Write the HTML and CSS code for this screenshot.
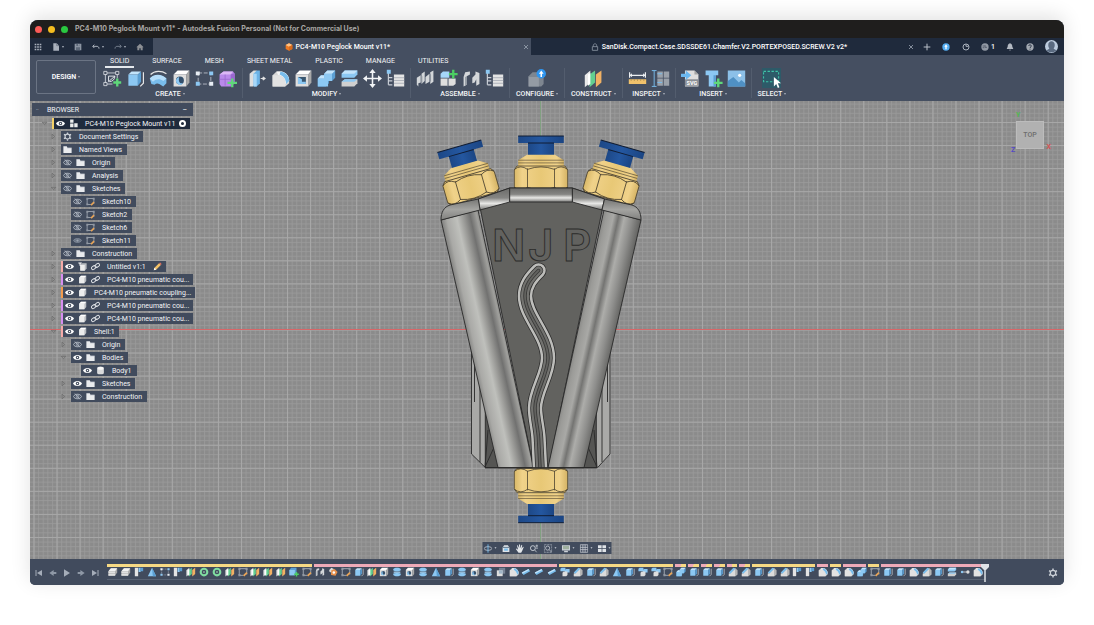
FILE: index.html
```html
<!DOCTYPE html>
<html lang="en">
<head>
<meta charset="utf-8">
<title>PC4-M10 Peglock Mount v11* - Autodesk Fusion Personal</title>
<link rel="stylesheet" href="styles.css">
</head>
<body>
<svg class="defs" width="0" height="0" aria-hidden="true">
<defs>
<symbol id="sketchnew" viewBox="0 0 24 24"><path d="M3 5h15v7M3 5v14h9" fill="none" stroke="#c9ced6" stroke-width="1.2"/><path d="M1 3h4v4H1zM16 3h4v4h-4zM1 17h4v4H1z" fill="#454f61" stroke="#e3e6ea"/><path d="M7 9h8l-8 7zM15 9c0 4-3 7-7 7" fill="none" stroke="#e3e6ea" stroke-width="1.2"/><path d="M18 12v10M13 17h10" stroke="#5fd87a" stroke-width="3"/></symbol>
<symbol id="ext" viewBox="0 0 24 24"><path d="M3 7l4-4h12l-4 4z" fill="#c3e4fb"/><path d="M3 7h12v14H3z" fill="#8cc8f3"/><path d="M15 7l4-4v13l-4 5z" fill="#5b9fd3"/><path d="M22 4v14l-4 4" fill="none" stroke="#e6e6e6" stroke-width="1.5"/></symbol>
<symbol id="sweep" viewBox="0 0 24 24"><path d="M2 7C7 2 16 2 22 6" fill="none" stroke="#e6e6e6" stroke-width="1.6"/><path d="M1 12c4-5 15-6 21 0v6l-4 4-5-3c-2-1-4-1-6 1l-4-1z" fill="#79bdec"/><path d="M1 12c4-6 15-7 21 0l-4 3c-4-3-9-3-13 1z" fill="#b5ddfa"/></symbol>
<symbol id="hole" viewBox="0 0 24 24"><path d="M2 7l5-5h15l-4 5z" fill="#fff"/><path d="M2 7h16v15H2z" fill="#dedede"/><path d="M18 7l4-5v15l-4 5z" fill="#a9a9a9"/><circle cx="10" cy="14.500" r="5" fill="#34506c"/><path d="M5 15a5 5 0 0 0 9 3c-5 1-6-3-5-8-3 1-4 3-4 5z" fill="#8cc8f3"/></symbol>
<symbol id="rect" viewBox="0 0 24 24"><path d="M4 5h16v14H4z" fill="none" stroke="#c9ced6" stroke-dasharray="5 2"/><path d="M1 3h5v5H1zM18 16h5v5h-5z" fill="#e8eef4"/><path d="M18 3h5v5h-5zM1 16h5v5H1z" fill="#8cc8f3"/></symbol>
<symbol id="form" viewBox="0 0 24 24"><path d="M2 7l5-4h12l2 3v12l-5 4H4l-2-3z" fill="#b98aea"/><path d="M2 7l5-4h12l-3 4z" fill="#dcb8f6"/><path d="M16 7l5-2v13l-5 4z" fill="#9a68cf"/><path d="M9 7v14M2 13h14l5-2" stroke="#9a68cf" fill="none"/><path d="M18 12v11M12 17.500h12" stroke="#5fd87a" stroke-width="3"/></symbol>
<symbol id="press" viewBox="0 0 24 24"><path d="M2 6l5-4h4v16l-5 4H2z" fill="#dedede"/><path d="M7 6l4-4h4v16l-4 4H7z" fill="#6db3e6"/><path d="M7 6h4v16H7z" fill="#a6d7f9"/><path d="M16 12h5M19 10l3 2-3 2z" stroke="#e6e6e6" stroke-width="1.200" fill="#e6e6e6"/></symbol>
<symbol id="fillet" viewBox="0 0 24 24"><path d="M2 8l5-5h7c5 1 9 6 9 11v4l-5 4H2z" fill="#d5d5d5"/><path d="M7 3h6c6 1 10 6 10 12l-5 4c0-7-3-10-9-11z" fill="#f4f4f4"/><path d="M12 3c6 1 11 5 11 12l-4 4c0-6-3-10-8-12z" fill="#79bdec"/><path d="M2 8h6c6 0 10 5 10 11v3H2z" fill="#e2e2e2"/></symbol>
<symbol id="chamfer" viewBox="0 0 24 24"><path d="M2 14L13 3h5l5 5v10l-5 4H2z" fill="#b4b4b4"/><path d="M2 13L13 2l5 2L6 17z" fill="#79bdec"/><path d="M5 17l12-12v17H2v-5z" fill="#dcdcdc"/></symbol>
<symbol id="shell" viewBox="0 0 24 24"><path d="M2 7l5-5h15l-4 5z" fill="#fff"/><path d="M18 7l4-5v15l-4 5z" fill="#a9a9a9"/><path d="M2 7h16v15H2z" fill="#dedede"/><path d="M5 10h10v9H5z" fill="#39566f"/><path d="M5 10l5 3v3h5v3H5z" fill="#8cc8f3"/></symbol>
<symbol id="combine" viewBox="0 0 24 24"><path d="M1 12l4-4h4V6l4-4h10v9l-4 4h-4v3l-4 4H1z" fill="#5b9fd3"/><path d="M1 12h8V6h10v9h-5v7H1z" fill="#8cc8f3"/><path d="M1 12l4-4h4v4zM9 6l4-4h10l-4 4z" fill="#c3e4fb"/></symbol>
<symbol id="split" viewBox="0 0 24 24"><path d="M2 6l4-4h16v5l-4 4H2z" fill="#8cc8f3"/><path d="M2 6l4-4h16l-4 4z" fill="#c3e4fb"/><path d="M2 16l4-3h16v5l-4 4H2z" fill="#cfcfcf"/><path d="M2 16l4-3h16l-4 3z" fill="#8cc8f3"/></symbol>
<symbol id="move" viewBox="0 0 24 24"><path d="M12 3v18M3 12h18" stroke="#f2f4f6" stroke-width="2"/><path d="M12 0l4 5H8zM12 24l4-5H8zM0 12l5-4v8zM24 12l-5-4v8z" fill="#f2f4f6"/></symbol>
<symbol id="param" viewBox="0 0 24 24"><path d="M3 5v15M3 11h5M3 15h5M3 20h5" stroke="#c9ced6" stroke-width="1.500" fill="none"/><path d="M1 1h5v5H1z" fill="#8cc8f3"/><path d="M10 7h13v15H10z" fill="#e4e4e4"/><path d="M10 11h13M10 14.500h13M10 18h13" stroke="#a2a8b1"/></symbol>
<symbol id="joint" viewBox="0 0 24 24"><path d="M1 11l5-3v9l-3 1v4l-2-2zM7 6l4-3v12l-4 4zM12 10l5-4v10l-5 3zM18 4l4-2v14l-4 3z" fill="#d4d7da"/><path d="M6 8l2 1v9l-2-1zM17 6l2 1v9l-2-1z" fill="#8e959e"/></symbol>
<symbol id="newcomp" viewBox="0 0 24 24"><path d="M2 6l3-3h8v8H2z" fill="#a6d7f9"/><path d="M2 12h9v9H2zM12 12h9v7l-3 2h-6z" fill="#dedede"/><path d="M11 12v10" stroke="#8a929d"/><path d="M18 1v11M12.500 6.500h11" stroke="#4ccf63" stroke-width="3"/></symbol>
<symbol id="newbox" viewBox="0 0 24 24"><path d="M1 7l4-5h13v12l-4 6H1z" fill="#5b9fd3"/><path d="M1 7h13v13H1z" fill="#8cc8f3"/><path d="M18 12v11M12.500 17.500h11" stroke="#4ccf63" stroke-width="3.500"/></symbol>
<symbol id="jorigin" viewBox="0 0 24 24"><path d="M2 10l2-6 6-1v4l-4 2v11l-4 2zM13 11l4-4v-4l5 2v14l-4 2v-8l-2 4-3 1z" fill="#d4d7da"/><path d="M4 10l2-1v11l-2 1z" fill="#8e959e"/></symbol>
<symbol id="configure" viewBox="0 0 24 24"><path d="M2 9l5-5h8l6 6v9l-3 3H2z" fill="#7e8690"/><path d="M2 10h13v12H2z" fill="#949ba4"/><circle cx="18" cy="6" r="6" fill="#2f95ef"/><path d="M18 2l3 4h-2v4h-2V6h-2z" fill="#fff"/></symbol>
<symbol id="planes" viewBox="0 0 24 24"><path d="M1 8l7-6v15l-7 6z" fill="#e9e9e9"/><path d="M7 7l7-5v15l-7 6z" fill="#63cf90"/><path d="M15 7l7-5v15l-7 6z" fill="#f1b164"/><path d="M5 7l3-2v14l-3 2z" fill="#fff"/></symbol>
<symbol id="measure" viewBox="0 0 24 24"><path d="M2 8h20M2 4v7M22 4v7" stroke="#eceff2" stroke-width="1.500"/><path d="M5 5.500L2 8l3 2.500zM19 5.500L22 8l-3 2.500z" fill="#eceff2"/><path d="M1 13h22v6H1z" fill="#f0c16b"/><path d="M4 13v2M8 13v2M12 13v2M16 13v2M20 13v2" stroke="#a98a4c"/></symbol>
<symbol id="interf" viewBox="0 0 24 24"><path d="M8 3h7v8H8zM16 3h7v8h-7zM8 12h7v9H8zM16 12h7v9h-7z" fill="#9aa1aa"/><path d="M1 2h6M4 2v20M1 22h6M8 6h6M8 17h6" stroke="#79bdec" stroke-width="1.200"/></symbol>
<symbol id="insvg" viewBox="0 0 24 24"><path d="M5 2h12l5 5v15H5z" fill="#dedede"/><path d="M17 2l5 5h-5z" fill="#a4a4a4"/><path d="M5 13h17v8H5z" fill="#8a8f96"/><text x="7" y="20" font-size="7" font-weight="700" fill="#fff" font-family="Roboto, sans-serif">SVG</text><path d="M0 6h6V2l7 6-7 6v-4H0z" fill="#6bb8f0"/></symbol>
<symbol id="mcm" viewBox="0 0 24 24"><path d="M2 2h16v6h-3v14H6V8H2z" fill="#8cc8f3"/><path d="M12 8h3v14h-3z" fill="#5b9fd3"/><path d="M18 12v11M12.500 17.500h11" stroke="#5fd87a" stroke-width="3"/></symbol>
<symbol id="image" viewBox="0 0 24 24"><path d="M1 2h22v20H1z" fill="#8cc0e8"/><path d="M1 22v-7l7-5 7 7 3-3 5 4v4z" fill="#4f90c4"/><circle cx="16" cy="8" r="2" fill="#fff"/></symbol>
<symbol id="select" viewBox="0 0 24 24"><path d="M2 3h19v13H2z" fill="none" stroke="#3fc4a8" stroke-width="1.300" stroke-dasharray="3 2"/><path d="M15 10v12l3-3 2 5 2-1-2-5h4z" fill="#fff"/></symbol>
<symbol id="tri" viewBox="0 0 24 24"><path d="M12 2l10 20H2z" fill="#8cc8f3"/><path d="M12 2l10 20h-8z" fill="#5b9fd3"/></symbol>
<symbol id="flag" viewBox="0 0 24 24"><path d="M2 2h8v20H2z" fill="#e4e4e4"/><path d="M11 2h5v10h-5z" fill="#8cc8f3"/><path d="M16 2h6v8h-6z" fill="#5b9fd3"/></symbol>
<symbol id="stack" viewBox="0 0 24 24"><path d="M1 10l6-7h15v10l-5 8H1z" fill="#aaa"/><path d="M1 10l6-7h15l-5 7z" fill="#f2f2f2"/><path d="M1 11h16v4H1zM1 16h16v5H1z" fill="#e0e0e0"/></symbol>
<symbol id="ring" viewBox="0 0 24 24"><circle cx="12" cy="12" r="8" fill="none" stroke="#7fdca0" stroke-width="5"/><circle cx="12" cy="12" r="2" fill="#b6eec8"/></symbol>
<symbol id="sk" viewBox="0 0 24 24"><path d="M3 4h18v14M3 4v16h10" fill="none" stroke="#aeb4bd" stroke-width="2"/><path d="M1 2h5v5H1zM18 2h5v5h-5zM1 17h5v5H1z" fill="#9299a4"/><path d="M12 20l8-8 3 3-8 8z" fill="#e8a457"/></symbol>
<symbol id="thread" viewBox="0 0 24 24"><path d="M6 2h12v20H6z" fill="#39566f"/><path d="M3 5c4-4 14-4 18 0v3c-4 3-14 3-18 0zM3 16c4-2 14-2 18 0v3c-4 4-14 4-18 0z" fill="#8cc8f3"/><path d="M4 11h16v3H4z" fill="#a6d0ee"/></symbol>
<symbol id="orb" viewBox="0 0 24 24"><path d="M3 7l5-5 6 3v6l-6 3-5-3z" fill="#dcdcdc"/><path d="M8 8l8-3 7 7-5 9-11-2z" fill="#e8914c"/><circle cx="14" cy="13" r="3" fill="#fff"/></symbol>
<symbol id="rod" viewBox="0 0 24 24"><path d="M2 13L18 5l4 5L6 19z" fill="#79bdec"/><path d="M2 13L18 5l2 2L3 16z" fill="#c3e4fb"/></symbol>
<symbol id="pattern" viewBox="0 0 24 24"><path d="M1 4l3-2h9v8H1zM12 7l3-2h8v8H12z" fill="#8cc8f3"/><path d="M6 14l3-3h9v8l-3 3H6z" fill="#dedede"/></symbol>
<symbol id="cut" viewBox="0 0 24 24"><path d="M7 2h15v14H7z" fill="#768294"/><path d="M2 8h14v14H2z" fill="#dedede"/><path d="M7 8h9v8H7z" fill="#9fb4c6"/></symbol>
<symbol id="align" viewBox="0 0 24 24"><path d="M5 12h14" stroke="#dedede" stroke-width="2"/><circle cx="5" cy="12" r="3" fill="#8cc8f3"/><circle cx="19" cy="12" r="4" fill="#dedede"/></symbol>
<symbol id="eye" viewBox="0 0 24 24"><path d="M0 12C4 3 20 3 24 12 20 21 4 21 0 12z" fill="#fff"/><circle cx="12" cy="12" r="4.500" fill="#343e50"/><circle cx="12" cy="12" r="2" fill="#fff"/></symbol>
<symbol id="eyeoff" viewBox="0 0 24 24"><path d="M1 12C5 4 19 4 23 12 19 20 5 20 1 12z" fill="none" stroke="#b8bfc9" stroke-width="2.500"/><circle cx="12" cy="12" r="3.500" fill="none" stroke="#b8bfc9" stroke-width="2"/><path d="M5 4l14 16" stroke="#b8bfc9" stroke-width="2"/></symbol>
<symbol id="eyedim" viewBox="0 0 24 24"><path d="M1 12C5 5 19 5 23 12 19 19 5 19 1 12z" fill="#6b7585" stroke="#8a93a1" stroke-width="2"/><circle cx="12" cy="12" r="3" fill="#9aa3b0"/></symbol>
<symbol id="folder" viewBox="0 0 24 24"><path d="M1 3h9l2 4h11v14H1z" fill="#e9ebee"/><path d="M11 8h12" stroke="#9aa3b0"/></symbol>
<symbol id="comp" viewBox="0 0 24 24"><path d="M3 7l5-5h14v14l-5 6H3z" fill="#b9bcc1"/><path d="M3 7l5-5h14l-5 5z" fill="#fff"/><path d="M3 7h14v15H3z" fill="#eceded"/></symbol>
<symbol id="anchor" viewBox="0 0 24 24"><path d="M6 8l5-5h12v14l-5 6H6z" fill="#b9bcc1"/><path d="M6 8h12v15H6z" fill="#eceded"/><path d="M1 1h9v3H7v6H4V4H1z" fill="#fff"/></symbol>
<symbol id="asm" viewBox="0 0 24 24"><path d="M3 1h9v9H3zM3 12h9v10H3zM14 11h9v11h-9z" fill="#eceded"/></symbol>
<symbol id="body" viewBox="0 0 24 24"><rect x="3" y="2" width="18" height="20" rx="5" fill="#d9dadc"/><ellipse cx="12" cy="6" rx="8" ry="4" fill="#f7f7f7"/></symbol>
<symbol id="link" viewBox="0 0 24 24"><g fill="none" stroke="#dde0e4" stroke-width="2.500"><rect x="1" y="11" width="13" height="8" rx="4" transform="rotate(-35 7 15)"/><rect x="10" y="5" width="13" height="8" rx="4" transform="rotate(-35 17 9)"/></g></symbol>
<symbol id="gear" viewBox="0 0 24 24"><circle cx="12" cy="12" r="6.500" fill="none" stroke="#cbd0d7" stroke-width="3"/><g stroke="#cbd0d7" stroke-width="3.500"><path d="M12 1v4M12 19v4M2.500 6.500L6 8.500M18 15.500l3.500 2M21.500 6.500L18 8.500M6 15.500l-3.500 2"/></g></symbol>
<symbol id="pencil" viewBox="0 0 24 24"><path d="M2 22l2-7L16 3l5 5L9 20z" fill="#f2c166"/><path d="M16 3l3-2 4 4-2 3z" fill="#e8705f"/><path d="M2 22l2-7 5 5z" fill="#fff"/></symbol>
<symbol id="closed" viewBox="0 0 24 24"><path d="M7 4l9 8-9 8z" fill="none" stroke="#6a6a6a" stroke-width="2.500"/></symbol>
<symbol id="open" viewBox="0 0 24 24"><path d="M4 8h16l-8 8z" fill="none" stroke="#6a6a6a" stroke-width="2.500"/></symbol>
<symbol id="grid" viewBox="0 0 24 24"><path d="M2 2h5v5H2zM9.500 2h5v5h-5zM17 2h5v5h-5zM2 9.500h5v5H2zM9.500 9.500h5v5h-5zM17 9.500h5v5h-5zM2 17h5v5H2zM9.500 17h5v5h-5zM17 17h5v5h-5z" fill="#aab1bc"/></symbol>
<symbol id="file" viewBox="0 0 24 24"><path d="M4 1h10l7 7v15H4z" fill="#aab1bc"/><path d="M14 1v7h7" fill="none" stroke="#1f2a3c"/></symbol>
<symbol id="save" viewBox="0 0 24 24"><path d="M2 2h20v20H2z" fill="#8c95a2"/><path d="M7 2h10v7H7zM6 13h12v9H6z" fill="#5d6878"/><path d="M13 3h3v5h-3z" fill="#aab1bc"/></symbol>
<symbol id="undo" viewBox="0 0 24 24"><path d="M7 5l-5 5 5 5M3 10h12c4 0 6 3 6 7" fill="none" stroke="#aab1bc" stroke-width="3"/></symbol>
<symbol id="redo" viewBox="0 0 24 24"><path d="M17 5l5 5-5 5M21 10H9c-4 0-6 3-6 7" fill="none" stroke="#717b8a" stroke-width="3"/></symbol>
<symbol id="home" viewBox="0 0 24 24"><path d="M12 2l11 11h-3v9h-6v-6h-4v6H4v-9H1z" fill="#8c8f94"/></symbol>
<symbol id="cube" viewBox="0 0 24 24"><path d="M12 1l10 5v12l-10 5-10-5V6z" fill="#ee7a22"/><path d="M12 1l10 5-10 5L2 6z" fill="#ffc384"/><path d="M12 11l10-5v12l-10 5z" fill="#d96a1a"/></symbol>
<symbol id="lock" viewBox="0 0 24 24"><path d="M4 11h16v11H4zM7 11V7c0-6 10-6 10 0v4" fill="none" stroke="#8c95a2" stroke-width="2.500"/></symbol>
<symbol id="x" viewBox="0 0 24 24"><path d="M6 6l12 12M18 6L6 18" stroke="#98a1ae" stroke-width="2.500"/></symbol>
<symbol id="plus" viewBox="0 0 24 24"><path d="M12 2v20M2 12h20" stroke="#b9bfc8" stroke-width="3"/></symbol>
<symbol id="up" viewBox="0 0 24 24"><circle cx="12" cy="12" r="11" fill="#55aef2"/><path d="M12 4l5 7h-3v8h-4v-8H7z" fill="#fff"/></symbol>
<symbol id="refresh" viewBox="0 0 24 24"><circle cx="12" cy="12" r="9" fill="none" stroke="#aab1bc" stroke-width="3"/><path d="M12 4v6h7" fill="none" stroke="#aab1bc" stroke-width="3"/></symbol>
<symbol id="clock" viewBox="0 0 24 24"><circle cx="12" cy="12" r="11" fill="#9299a4"/><path d="M12 6v7h6M5 9h5M5 14h5" fill="none" stroke="#3c4656" stroke-width="2"/></symbol>
<symbol id="bell" viewBox="0 0 24 24"><path d="M12 1c5 1 7 5 7 10l3 7H2l3-7c0-5 2-9 7-10zM9 20h6l-3 3z" fill="#b3b9c2"/></symbol>
<symbol id="help" viewBox="0 0 24 24"><circle cx="12" cy="12" r="11" fill="#a3a9b2"/><path d="M8 9c0-5 8-5 8 0 0 3-4 3-4 6M12 17v3" fill="none" stroke="#1f2a3c" stroke-width="2.500"/></symbol>
<symbol id="user" viewBox="0 0 24 24"><circle cx="12" cy="12" r="12" fill="#bccbdd"/><path d="M6 9c0-9 12-9 12 0 0 4-2 6-2 7l5 3c-4 5-14 5-18 0l5-3c0-1-2-3-2-7z" fill="#5a6a80"/></symbol>
<symbol id="orbit" viewBox="0 0 24 24"><ellipse cx="12" cy="12" rx="10" ry="5" fill="none" stroke="#cbd0d7" stroke-width="2"/><path d="M12 1v22" stroke="#79bdec" stroke-width="2.500"/></symbol>
<symbol id="look" viewBox="0 0 24 24"><path d="M3 9l4-6h10l4 6v12H3z" fill="#dfe3e7"/><path d="M3 9h18" stroke="#39566f" stroke-width="2"/><path d="M7 12h10v6H7z" fill="#79bdec"/></symbol>
<symbol id="hand" viewBox="0 0 24 24"><path d="M8 23l-7-10 2-1 4 3L4 4l2-1 4 8-1-10h3l1 10 3-9 2 1-2 10 4-6 2 1-4 10-3 5z" fill="#e4e7ea"/></symbol>
<symbol id="zoom" viewBox="0 0 24 24"><circle cx="9" cy="11" r="6.500" fill="none" stroke="#cbd0d7" stroke-width="2.500"/><path d="M14 16l5 6M16 5h7M19.500 1.500v7M17 11h6" stroke="#cbd0d7" stroke-width="2"/></symbol>
<symbol id="fit" viewBox="0 0 24 24"><path d="M2 2h20v20H2z" fill="none" stroke="#aab1bc" stroke-width="2" stroke-dasharray="6 2"/><circle cx="11" cy="11" r="5.500" fill="none" stroke="#cbd0d7" stroke-width="2"/><path d="M15 15l6 6" stroke="#cbd0d7" stroke-width="2"/></symbol>
<symbol id="display" viewBox="0 0 24 24"><path d="M1 3h22v14H1z" fill="#cbd0d7"/><path d="M4 5h16v9H4z" fill="#9fb09f"/><path d="M7 18h10v4H7z" fill="#cbd0d7"/></symbol>
<symbol id="lattice" viewBox="0 0 24 24"><path d="M2 2h20v20H2zM9 2v20M15 2v20M2 9h20M2 15h20" fill="none" stroke="#c9ced6" stroke-width="2"/></symbol>
<symbol id="views" viewBox="0 0 24 24"><path d="M1 3h10v8H1zM13 3h10v8H13zM1 13h10v8H1zM13 13h10v8H13z" fill="#dfe3e7"/></symbol>
<symbol id="first" viewBox="0 0 24 24"><path d="M3 3v18" stroke="#a5adb9" stroke-width="3"/><path d="M21 3v18L6 12z" fill="#a5adb9"/></symbol>
<symbol id="prev" viewBox="0 0 24 24"><path d="M14 3v18L1 12zM14 9h8v6h-8z" fill="#8e98a6"/></symbol>
<symbol id="play" viewBox="0 0 24 24"><path d="M3 1v22l18-11z" fill="#a5adb9"/></symbol>
<symbol id="next" viewBox="0 0 24 24"><path d="M10 3v18l13-9zM2 9h8v6H2z" fill="#8e98a6"/></symbol>
<symbol id="last" viewBox="0 0 24 24"><path d="M21 3v18" stroke="#a5adb9" stroke-width="3"/><path d="M3 3v18l15-9z" fill="#a5adb9"/></symbol>
</defs>
</svg>

<main class="window">
<header class="titlebar">
  <span class="light red"></span><span class="light amber"></span><span class="light green"></span>
  <h1>PC4-M10 Peglock Mount v11* - Autodesk Fusion Personal (Not for Commercial Use)</h1>
</header>

<div class="docbar">
  <div class="quick">
    <button aria-label="Data panel"><svg><use href="#grid"/></svg></button>
    <button class="drop" aria-label="File"><svg><use href="#file"/></svg></button>
    <button aria-label="Save"><svg><use href="#save"/></svg></button>
    <button class="drop" aria-label="Undo"><svg><use href="#undo"/></svg></button>
    <button class="drop" aria-label="Redo"><svg><use href="#redo"/></svg></button>
    <button aria-label="Home"><svg><use href="#home"/></svg></button>
  </div>
  <div class="doc active"><button class="docname"><svg><use href="#cube"/></svg>PC4-M10 Peglock Mount v11*</button><button aria-label="Close"><svg><use href="#x"/></svg></button></div>
  <div class="doc"><button class="docname"><svg><use href="#lock"/></svg>SanDisk.Compact.Case.SDSSDE61.Chamfer.V2.PORTEXPOSED.SCREW.V2 v2*</button><button aria-label="Close"><svg><use href="#x"/></svg></button></div>
  <div class="status">
    <button aria-label="New design"><svg><use href="#plus"/></svg></button>
    <button aria-label="Updates"><svg><use href="#up"/></svg></button>
    <button aria-label="Sync"><svg><use href="#refresh"/></svg></button>
    <button aria-label="Jobs"><svg><use href="#clock"/></svg>1</button>
    <button aria-label="Notifications"><svg><use href="#bell"/></svg></button>
    <button aria-label="Help"><svg><use href="#help"/></svg></button>
    <button class="avatar" aria-label="Account"><svg><use href="#user"/></svg></button>
  </div>
</div>

<div class="toolbar">
  <button class="workspace drop">DESIGN</button>
  <div class="ribbon">
    <nav class="tabs">
      <button class="current">SOLID</button><button>SURFACE</button><button>MESH</button><button>SHEET METAL</button><button>PLASTIC</button><button>MANAGE</button><button>UTILITIES</button>
    </nav>
    <div class="groups">
      <section class="group"><div class="icons">
        <button aria-label="Create Sketch"><svg><use href="#sketchnew"/></svg></button><button aria-label="Extrude"><svg><use href="#ext"/></svg></button><button aria-label="Sweep"><svg><use href="#sweep"/></svg></button><button aria-label="Hole"><svg><use href="#hole"/></svg></button><button aria-label="Pattern"><svg><use href="#rect"/></svg></button><button aria-label="Create Form"><svg><use href="#form"/></svg></button></div>
        <button class="label drop">CREATE</button></section>
      <section class="group"><div class="icons">
        <button aria-label="Press Pull"><svg><use href="#press"/></svg></button><button aria-label="Fillet"><svg><use href="#fillet"/></svg></button><button aria-label="Shell"><svg><use href="#shell"/></svg></button><button aria-label="Combine"><svg><use href="#combine"/></svg></button><button aria-label="Split Body"><svg><use href="#split"/></svg></button><button aria-label="Move"><svg><use href="#move"/></svg></button><button aria-label="Parameters"><svg><use href="#param"/></svg></button></div>
        <button class="label drop">MODIFY</button></section>
      <section class="group"><div class="icons">
        <button aria-label="Joint"><svg><use href="#joint"/></svg></button><button aria-label="New Component"><svg><use href="#newcomp"/></svg></button><button aria-label="Joint Origin"><svg><use href="#jorigin"/></svg></button><button aria-label="Component Table"><svg><use href="#param"/></svg></button></div>
        <button class="label drop">ASSEMBLE</button></section>
      <section class="group"><div class="icons"><button aria-label="Configure"><svg><use href="#configure"/></svg></button></div>
        <button class="label drop">CONFIGURE</button></section>
      <section class="group"><div class="icons"><button aria-label="Offset Plane"><svg><use href="#planes"/></svg></button></div>
        <button class="label drop">CONSTRUCT</button></section>
      <section class="group"><div class="icons"><button aria-label="Measure"><svg><use href="#measure"/></svg></button><button aria-label="Interference"><svg><use href="#interf"/></svg></button></div>
        <button class="label drop">INSPECT</button></section>
      <section class="group"><div class="icons"><button aria-label="Insert SVG"><svg><use href="#insvg"/></svg></button><button aria-label="Insert Fastener"><svg><use href="#mcm"/></svg></button><button aria-label="Canvas"><svg><use href="#image"/></svg></button></div>
        <button class="label drop">INSERT</button></section>
      <section class="group"><div class="icons"><button class="picked" aria-label="Select"><svg><use href="#select"/></svg></button></div>
        <button class="label drop">SELECT</button></section>
    </div>
  </div>
</div>

<div class="viewport">
<svg class="scene" viewBox="30 101 1034 458" preserveAspectRatio="xMidYMid slice" role="img" aria-label="Peglock mount model, top view">
  <defs>
    <pattern id="minor" x="540.600" y="329.500" width="4.610" height="4.610" patternUnits="userSpaceOnUse"><path d="M0 .500h4.610M.500 0v4.610" stroke="#999" stroke-width=".8"/></pattern>
    <pattern id="major" x="540.600" y="329.500" width="23.050" height="23.050" patternUnits="userSpaceOnUse"><path d="M0 .500h23.050M.500 0v23.050" stroke="#a8a8a8" stroke-width="1"/></pattern>
    <linearGradient id="legL" gradientUnits="userSpaceOnUse" x1="466" y1="330" x2="507" y2="321">
      <stop offset="0" stop-color="#858583"/><stop offset=".12" stop-color="#a9a9a6"/><stop offset=".36" stop-color="#bfc0bc"/><stop offset=".52" stop-color="#999996"/><stop offset=".68" stop-color="#717170"/><stop offset=".83" stop-color="#9f9f9c"/><stop offset="1" stop-color="#6d6d6b"/></linearGradient>
    <linearGradient id="legR" gradientUnits="userSpaceOnUse" x1="575" y1="321" x2="616" y2="330">
      <stop offset="0" stop-color="#757573"/><stop offset=".2" stop-color="#9b9b98"/><stop offset=".36" stop-color="#a9a9a6"/><stop offset=".48" stop-color="#747472"/><stop offset=".62" stop-color="#adadaa"/><stop offset=".8" stop-color="#8e8e8c"/><stop offset="1" stop-color="#666664"/></linearGradient>
    <linearGradient id="rim" x1="0" y1="0" x2="0" y2="1"><stop offset="0" stop-color="#6b6b69"/><stop offset=".45" stop-color="#858583"/><stop offset=".7" stop-color="#e8e8e6"/><stop offset="1" stop-color="#777775"/></linearGradient>
    <linearGradient id="cap" x1="0" y1="0" x2="0" y2="1"><stop offset="0" stop-color="#767674"/><stop offset=".5" stop-color="#a4a4a1"/><stop offset="1" stop-color="#80807e"/></linearGradient>
    <linearGradient id="brass" x1="0" x2="1"><stop offset="0" stop-color="#d9b867"/><stop offset=".15" stop-color="#f0d28a"/><stop offset=".5" stop-color="#e8c876"/><stop offset=".85" stop-color="#f0d28a"/><stop offset="1" stop-color="#d4b263"/></linearGradient>
    <linearGradient id="blue" x1="0" x2="1"><stop offset="0" stop-color="#1d4887"/><stop offset=".5" stop-color="#2457a0"/><stop offset="1" stop-color="#1b4583"/></linearGradient>
    <clipPath id="plate"><path d="M440 180h200v287.700H440z"/></clipPath>
    <path id="slot" d="M538.500 270.500C531 278 525 285 525 296c0 20 23 39 23 62 0 17-13 33-13 50 0 10 3 20 3.500 30l2 40"/>
    <g id="coupling" stroke="#4b4230" stroke-width=".8" stroke-linejoin="round">
      <path d="M-13-49h26v14h-26z" fill="url(#blue)" stroke="none"/>
      <path d="M-22.800-54.400h45.600v7h-45.600z" fill="url(#blue)" stroke="none"/>
      <path d="M-22.800-54.400h45.600M-13-47.400h26" stroke="#111d33" stroke-width="1"/>
      <path d="M-14-35.700h28l8.800 5.500v5.800h-45.600v-5.800z" fill="url(#brass)" stroke="none"/>
      <path d="M-22.800-30.200h45.600M-22.800-27.500h45.600" stroke-width=".6"/>
      <path d="M-24-24.400h48l2.700 4v17l-2.700 3.400h-48l-2.700-3.400v-17z" fill="url(#brass)"/>
      <path d="M-13.500-22v19.500M13.500-22v19.500M-26.700-21q6.500-5 13.200 0 13.500-5 27 0 6.500-5 13.200 0M-26.700-3q6.500 5 13.200 0 13.500 5 27 0 6.500 5 13.200 0" fill="none"/>
    </g>
  </defs>
  <rect x="30" y="101" width="1034" height="458" fill="#8b8b8b"/>
  <rect x="30" y="101" width="1034" height="458" fill="url(#minor)"/>
  <rect x="30" y="101" width="1034" height="458" fill="url(#major)"/>
  <path d="M540.500 101v458" stroke="#6fa36f" stroke-opacity=".6"/>
  <rect x="30" y="329" width="1034" height="1" fill="#d96668"/>
  <use href="#coupling" transform="translate(541 190.400)"/>
  <use href="#coupling" transform="translate(474.300 198.600) rotate(-16)"/>
  <use href="#coupling" transform="translate(607.700 198.600) rotate(16)"/>
  <use href="#coupling" transform="translate(541 468.300) scale(1 -1)"/>
  <g stroke="#292929" stroke-width=".9" stroke-linejoin="round">
    <path d="M471.500 350v104l14 13.700h112l12.500-13.700V350z" fill="#a9a9a7"/>
    <path d="M485.300 400v67.700h111V400z" fill="#555553"/>
    <path d="M474.500 352v50M480 380v82M602 380v82M607.500 352v50M488 430l-3 37 11-24M594 430l3 37-11-24" fill="none"/>
    <path d="M478.300 199l31.400-11h62.600l32.200 11-56 268.700h-15z" fill="#62625f"/>
    <path d="M478.300 199l31.400-11v14l-29.700 8z" fill="url(#rim)"/>
    <path d="M604.500 199l-32.200-11v14l29.700 8z" fill="url(#rim)"/>
    <path d="M509.700 188h62.600v14h-62.600z" fill="url(#rim)"/>
    <path d="M441 220l37-10 55.500 257.700H498z" fill="url(#legL)"/>
    <path d="M641 220l-37-10-56 257.700h36z" fill="url(#legR)"/>
    <path d="M441 220c0-8 3-13 9-15l28.300-6 1.700 11z" fill="url(#cap)"/>
    <path d="M641 220c0-8-3-13-9-15l-27.500-6-2.500 11z" fill="url(#cap)"/>
  </g>
  <text x="492 528 563" y="261" font-family="Inter, sans-serif" font-weight="600" font-size="44" fill="none" stroke="#2b2b2a" stroke-width=".9">NJP</text>
  <g fill="none" stroke-linecap="round" clip-path="url(#plate)">
    <use href="#slot" stroke="#2b2b2b" stroke-width="16"/>
    <use href="#slot" stroke="#bdbdba" stroke-width="14.500"/>
    <use href="#slot" stroke="#2f2f2e" stroke-width="9.500"/>
    <use href="#slot" stroke="#72726f" stroke-width="8"/>
    <use href="#slot" stroke="#3a3a39" stroke-width="3.500"/>
    <use href="#slot" stroke="#62625f" stroke-width="1.800"/>
  </g>
  <path d="M485 467.700h112" stroke="#292929"/>
</svg>

<aside class="browser">
  <header><span class="grip">••</span><h2>BROWSER</h2><button aria-label="Collapse">–</button></header>
  <ul class="tree">
    <li class="root"><svg><use href="#open"/></svg><div class="node c-yellow"><svg><use href="#eye"/></svg><svg><use href="#asm"/></svg><span>PC4-M10 Peglock Mount v11</span><input type="radio" checked aria-label="Activate component"></div></li>
    <li><svg><use href="#closed"/></svg><div class="node"><svg><use href="#gear"/></svg><span>Document Settings</span></div></li>
    <li><svg><use href="#closed"/></svg><div class="node"><svg><use href="#folder"/></svg><span>Named Views</span></div></li>
    <li><svg><use href="#closed"/></svg><div class="node"><svg><use href="#eyeoff"/></svg><svg><use href="#folder"/></svg><span>Origin</span></div></li>
    <li><svg><use href="#closed"/></svg><div class="node"><svg><use href="#eyeoff"/></svg><svg><use href="#folder"/></svg><span>Analysis</span></div></li>
    <li><svg><use href="#open"/></svg><div class="node"><svg><use href="#eyeoff"/></svg><svg><use href="#folder"/></svg><span>Sketches</span></div></li>
    <li class="l2 leaf"><div class="node"><svg><use href="#eyeoff"/></svg><svg><use href="#sk"/></svg><span>Sketch10</span></div></li>
    <li class="l2 leaf"><div class="node"><svg><use href="#eyeoff"/></svg><svg><use href="#sk"/></svg><span>Sketch2</span></div></li>
    <li class="l2 leaf"><div class="node"><svg><use href="#eyeoff"/></svg><svg><use href="#sk"/></svg><span>Sketch6</span></div></li>
    <li class="l2 leaf"><div class="node"><svg><use href="#eyedim"/></svg><svg><use href="#sk"/></svg><span>Sketch11</span></div></li>
    <li><svg><use href="#closed"/></svg><div class="node"><svg><use href="#eyeoff"/></svg><svg><use href="#folder"/></svg><span>Construction</span></div></li>
    <li><svg><use href="#closed"/></svg><div class="node c-pink"><svg><use href="#eye"/></svg><svg><use href="#anchor"/></svg><svg><use href="#link"/></svg><span>Untitled v1:1</span><svg class="edit"><use href="#pencil"/></svg></div></li>
    <li><svg><use href="#closed"/></svg><div class="node c-violet"><svg><use href="#eye"/></svg><svg><use href="#comp"/></svg><svg><use href="#link"/></svg><span>PC4-M10 pneumatic cou...</span></div></li>
    <li><svg><use href="#closed"/></svg><div class="node c-orange"><svg><use href="#eye"/></svg><svg><use href="#comp"/></svg><span>PC4-M10 pneumatic coupling...</span></div></li>
    <li><svg><use href="#closed"/></svg><div class="node c-violet"><svg><use href="#eye"/></svg><svg><use href="#comp"/></svg><svg><use href="#link"/></svg><span>PC4-M10 pneumatic cou...</span></div></li>
    <li><svg><use href="#closed"/></svg><div class="node c-violet"><svg><use href="#eye"/></svg><svg><use href="#comp"/></svg><svg><use href="#link"/></svg><span>PC4-M10 pneumatic cou...</span></div></li>
    <li><svg><use href="#open"/></svg><div class="node c-pink"><svg><use href="#eye"/></svg><svg><use href="#comp"/></svg><span>Shell:1</span></div></li>
    <li class="l2"><svg><use href="#closed"/></svg><div class="node"><svg><use href="#eyeoff"/></svg><svg><use href="#folder"/></svg><span>Origin</span></div></li>
    <li class="l2"><svg><use href="#open"/></svg><div class="node"><svg><use href="#eye"/></svg><svg><use href="#folder"/></svg><span>Bodies</span></div></li>
    <li class="l3 leaf"><div class="node"><svg><use href="#eye"/></svg><svg><use href="#body"/></svg><span>Body1</span></div></li>
    <li class="l2"><svg><use href="#closed"/></svg><div class="node"><svg><use href="#eye"/></svg><svg><use href="#folder"/></svg><span>Sketches</span></div></li>
    <li class="l2"><svg><use href="#closed"/></svg><div class="node"><svg><use href="#eyeoff"/></svg><svg><use href="#folder"/></svg><span>Construction</span></div></li>
  </ul>
</aside>

<div class="viewcube"><span class="ay">Y</span><button>TOP</button><span class="az">Z</span><span class="ax">X</span></div>

<div class="navbar">
  <button class="drop" aria-label="Orbit"><svg><use href="#orbit"/></svg></button><button aria-label="Look At"><svg><use href="#look"/></svg></button><button aria-label="Pan"><svg><use href="#hand"/></svg></button><button aria-label="Zoom"><svg><use href="#zoom"/></svg></button><button class="drop" aria-label="Fit"><svg><use href="#fit"/></svg></button><button class="drop" aria-label="Display Settings"><svg><use href="#display"/></svg></button><button class="drop" aria-label="Grid and Snaps"><svg><use href="#lattice"/></svg></button><button class="drop" aria-label="Viewports"><svg><use href="#views"/></svg></button>
</div>
</div>

<footer class="timeline">
  <div class="playback"><button aria-label="First"><svg><use href="#first"/></svg></button><button aria-label="Previous"><svg><use href="#prev"/></svg></button><button aria-label="Play"><svg><use href="#play"/></svg></button><button aria-label="Next"><svg><use href="#next"/></svg></button><button aria-label="Last"><svg><use href="#last"/></svg></button></div>
  <ol class="steps">
    <li class="y"><svg><use href="#stack"/></svg></li><li class="y"><svg><use href="#stack"/></svg></li><li class="y"><svg><use href="#flag"/></svg></li><li class="y"><svg><use href="#tri"/></svg></li><li class="y"><svg><use href="#rect"/></svg></li><li class="y"><svg><use href="#flag"/></svg></li><li class="y"><svg><use href="#planes"/></svg></li><li class="y"><svg><use href="#ring"/></svg></li><li class="y"><svg><use href="#ring"/></svg></li><li class="y"><svg><use href="#planes"/></svg></li><li class="y"><svg><use href="#sk"/></svg></li><li class="y"><svg><use href="#planes"/></svg></li><li class="y"><svg><use href="#planes"/></svg></li><li class="y"><svg><use href="#planes"/></svg></li><li class="y"><svg><use href="#newbox"/></svg></li><li class="y end"><svg><use href="#sk"/></svg></li>
    <li class="p"><svg><use href="#jorigin"/></svg></li><li class="p"><svg><use href="#orb"/></svg></li><li class="p"><svg><use href="#sk"/></svg></li><li class="p"><svg><use href="#ext"/></svg></li><li class="p"><svg><use href="#planes"/></svg></li><li class="p"><svg><use href="#hole"/></svg></li><li class="p"><svg><use href="#thread"/></svg></li><li class="p"><svg><use href="#hole"/></svg></li><li class="p"><svg><use href="#thread"/></svg></li><li class="p"><svg><use href="#tri"/></svg></li><li class="p"><svg><use href="#ext"/></svg></li><li class="p"><svg><use href="#thread"/></svg></li><li class="p"><svg><use href="#hole"/></svg></li><li class="p"><svg><use href="#thread"/></svg></li><li class="p"><svg><use href="#cut"/></svg></li><li class="p"><svg><use href="#fillet"/></svg></li><li class="p"><svg><use href="#rod"/></svg></li><li class="p"><svg><use href="#rod"/></svg></li><li class="p end"><svg><use href="#rod"/></svg></li>
    <li class="y"><svg><use href="#pattern"/></svg></li><li class="y"><svg><use href="#chamfer"/></svg></li><li class="y"><svg><use href="#ext"/></svg></li><li class="y"><svg><use href="#chamfer"/></svg></li><li class="y"><svg><use href="#tri"/></svg></li><li class="y"><svg><use href="#ext"/></svg></li><li class="y"><svg><use href="#pattern"/></svg></li><li class="y"><svg><use href="#pattern"/></svg></li><li class="y end"><svg><use href="#sk"/></svg></li>
    <li class="m end"><svg><use href="#combine"/></svg></li><li class="m end"><svg><use href="#ext"/></svg></li><li class="m end"><svg><use href="#ext"/></svg></li><li class="m end"><svg><use href="#ext"/></svg></li><li class="m end"><svg><use href="#chamfer"/></svg></li><li class="m end"><svg><use href="#chamfer"/></svg></li>
    <li class="y"><svg><use href="#ext"/></svg></li><li class="y"><svg><use href="#chamfer"/></svg></li><li class="y"><svg><use href="#chamfer"/></svg></li><li class="y"><svg><use href="#flag"/></svg></li><li class="y end"><svg><use href="#flag"/></svg></li>
    <li class="p end"><svg><use href="#fillet"/></svg></li><li class="y end"><svg><use href="#fillet"/></svg></li><li class="p"><svg><use href="#fillet"/></svg></li><li class="p end"><svg><use href="#combine"/></svg></li><li class="y end"><svg><use href="#sk"/></svg></li>
    <li class="p"><svg><use href="#ext"/></svg></li><li class="p"><svg><use href="#ext"/></svg></li><li class="p"><svg><use href="#fillet"/></svg></li><li class="p"><svg><use href="#chamfer"/></svg></li><li class="p"><svg><use href="#ext"/></svg></li><li class="p"><svg><use href="#split"/></svg></li><li class="p"><svg><use href="#align"/></svg></li><li class="p"><svg><use href="#fillet"/></svg></li>
  </ol>
  <svg class="playhead" viewBox="0 0 8 20"><path d="M0 1h8v3L5 7H3L0 4z" fill="#dfe3e7"/><path d="M4 5v14" stroke="#dfe3e7" stroke-width="1.500"/></svg>
  <button class="prefs" aria-label="Timeline settings"><svg><use href="#gear"/></svg></button>
</footer>
</main>
</body>
</html>
```
FILE: styles.css
```css
* { box-sizing: border-box; }
body {
  margin: 0;
  height: 100vh;
  padding: 20px 30px 40px;
  display: flex;
  background: #fff;
  font-family: Roboto, "Open Sans", sans-serif;
  font-size: 7px;
  line-height: 10px;
  color: #f4f5f7;
}
.defs { position: absolute; }
h1, h2, ul, ol { margin: 0; padding: 0; font-size: inherit; list-style: none; }
button {
  margin: 0; padding: 0; border: 0; background: none;
  color: inherit; font: inherit;
  display: flex; align-items: center; justify-content: center;
}
svg { display: block; flex: none; }

.window {
  flex: 1; min-width: 0;
  display: flex; flex-direction: column;
  border-radius: 8px 8px 5px 5px;
  overflow: hidden;
  background: #454f61;
  box-shadow: 0 -4px 20px rgba(0, 0, 0, .12);
}

.titlebar { display: flex; align-items: center; height: 18px; padding-left: 5px; background: #1f1e1d; }
.light { width: 7px; height: 7px; margin-right: 6px; border-radius: 50%; }
.red { background: #fc5b57; }
.amber { background: #f5bd1f; }
.green { background: #2ac840; }
.titlebar h1 { margin-left: 1px; font-family: Inter, sans-serif; font-weight: 700; color: #a8a6a4; }

.docbar { display: flex; height: 17px; background: #1f2a3c; font-weight: 500; color: #fff; }
.docbar svg { width: 8px; height: 8px; }
.quick { display: flex; align-items: center; gap: 10px; width: 123px; padding-left: 4px; }
.drop::after {
  content: ""; margin-left: 2px;
  border: 1px solid transparent; border-top: 2px solid #aab1bc; border-bottom: 0;
}
.doc { flex: 51; display: flex; align-items: center; padding-right: 1px; }
.doc.active { flex: 50; background: #454f61; }
.docname { flex: 1; gap: 3px; padding-top: 1px; }
.status { display: flex; align-items: center; justify-content: space-between; width: 148px; padding: 0 6px 0 7px; }
.status button { gap: 2px; }
.status .avatar svg { width: 13px; height: 13px; }

.toolbar { display: flex; height: 46px; padding-left: 6px; font-weight: 500; }
.workspace { width: 60px; height: 34px; margin-top: 5px; border: 1px solid #6b7484; border-radius: 2px; font-weight: 700; }
.ribbon { margin-left: 2px; padding-top: 1px; }
.tabs { display: flex; gap: 13px; padding-left: 7px; height: 12px; font-weight: 400; }
.tabs button { padding: 0 5px; border-bottom: 2px solid transparent; }
.tabs .current { border-color: #e6e9ed; }
.groups { display: flex; }
.group { padding: 0 5px; border-right: 1px solid #535d6e; }
.group:last-child { border: 0; }
.icons { display: flex; justify-content: center; gap: 4px; height: 20px; }
.icons svg { width: 19px; height: 19px; }
.picked { background: #2d5a68; }
.label { width: 100%; height: 10px; padding: 1px 1px 0; }

.viewport { position: relative; flex: 1; min-height: 0; background: #8b8b8b; }
.scene { position: absolute; inset: 0; width: 100%; height: 100%; }

.browser { position: absolute; left: 2px; top: 2px; width: 161px; }
.browser header { display: flex; align-items: center; height: 13px; padding: 0 6px 0 4px; background: #414b5d; }
.grip { width: 11px; font-size: 4px; color: #9aa3b0; }
.browser h2 { flex: 1; font-weight: 400; }
.tree { padding-top: 1px; }
.tree li { display: flex; align-items: center; height: 13px; padding-left: 18px; }
.tree li > svg { width: 7px; height: 7px; margin-right: 4px; }
.tree .root { padding-left: 9px; }
.tree .l2 { padding-left: 28px; }
.tree .l3 { padding-left: 38px; }
.leaf .node { margin-left: 11px; }
.node {
  display: flex; align-items: center; gap: 4px;
  height: 11px; padding: 0 5px 0 2px;
  background: #414b5d; white-space: nowrap;
}
.node svg { width: 9px; height: 9px; }
.node span { margin-left: 3px; }
.node .edit { margin-left: 3px; }
.node[class*="c-"] { border-left: 2px solid; padding-right: 4px; }
.node.c-yellow { border-color: #f3d067; }
.node.c-pink { border-color: #f5aaa8; }
.node.c-violet { border-color: #d78df0; }
.node.c-orange { border-color: #f39b4c; }
.root .node { background: #1f2a3c; }
.root input {
  appearance: none; width: 7px; height: 7px; margin: 0;
  border: 2px solid #fff; border-radius: 50%; background: #1f2a3c;
}

.viewcube { position: absolute; right: 20px; top: 20px; }
.viewcube button { width: 28px; height: 28px; background: #b1b1b1; border: 1px solid #bcbcbc; color: #6c6c6c; font-weight: 500; }
.viewcube span { position: absolute; font-weight: 700; }
.ay { left: 0; top: -11px; color: #4fb84f; }
.ax { right: -7px; bottom: -3px; color: #d35454; }
.az { left: -5px; bottom: -6px; color: #5448c8; }

.navbar {
  position: absolute; left: 50%; bottom: 5px; transform: translateX(-50%);
  display: flex; align-items: center; gap: 5px;
  height: 12px; padding: 0 1px; background: #414b5d;
}
.navbar svg { width: 9px; height: 9px; }

.timeline { display: flex; height: 26px; background: #414b5d; }
.playback { display: flex; align-items: center; gap: 6px; width: 77px; padding: 2px 0 0 5px; }
.playback svg { width: 8px; height: 8px; }
.steps { flex: 1; display: flex; padding-top: 5px; }
.steps li { flex: 1; display: flex; flex-direction: column; align-items: center; }
.steps li::before { content: ""; align-self: stretch; height: 3px; background: #f6d984; }
.steps .p::before { background: #eeaab8; }
.steps .m::before { background: linear-gradient(100deg, #eeaab8 50%, #f6d984 50%); }
.steps .end::before { margin-right: 2px; }
.steps li::after { content: ""; align-self: stretch; margin-top: 2px; height: 1px; background: #596374; }
.steps svg { width: 10px; height: 10px; }
.playhead { width: 8px; height: 20px; margin: 4px 0 0 -4px; }
.prefs { width: 75px; padding: 2px 0 0 59px; justify-content: flex-start; }
.prefs svg { width: 10px; height: 10px; }
```
